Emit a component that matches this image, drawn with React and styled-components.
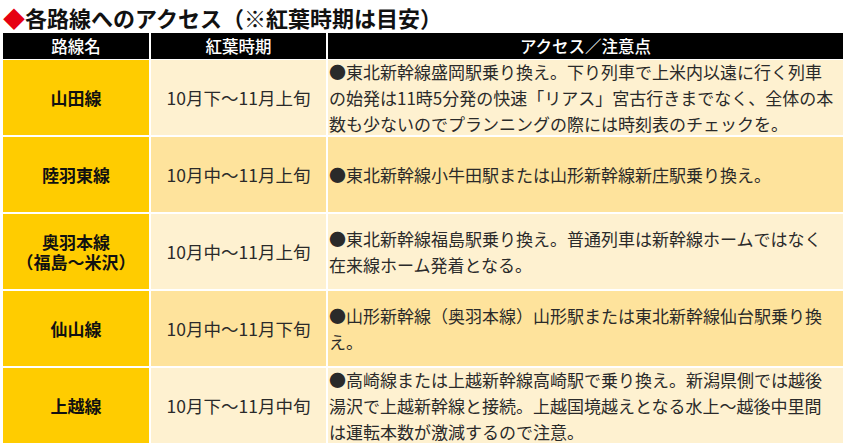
import React from "react";
import styled, { createGlobalStyle } from "styled-components";

const Global = createGlobalStyle`
  html, body { margin: 0; padding: 0; background: #ffffff; }
  body { font-family: "Noto Sans CJK JP", "Noto Sans", sans-serif; }
`;

const Page = styled.div`
  width: 846px;
  height: 445px;
  padding: 0 3px;
  box-sizing: border-box;
  overflow: hidden;
`;

const Title = styled.h1`
  margin: 0;
  height: 33px;
  display: flex;
  align-items: center;
  font-size: 22px;
  font-weight: 700;
  color: #111;
  letter-spacing: 0;
  white-space: nowrap;
`;

const Diamond = styled.span`
  color: #e60012;
`;

const Table = styled.div`
  display: grid;
  grid-template-columns: 146px 175px 1fr;
  grid-template-rows: 25px repeat(5, 75px);
  column-gap: 2px;
  row-gap: 2px;
`;

const Head = styled.div`
  background: #000;
  color: #fff;
  font-size: 16.5px;
  font-weight: 500;
  display: flex;
  align-items: center;
  justify-content: center;
  margin-bottom: -1px;
`;

const LineName = styled.div`
  background: #ffcc00;
  color: #111;
  font-size: 17px;
  font-weight: 700;
  display: flex;
  flex-direction: column;
  align-items: center;
  justify-content: center;
  text-align: center;
`;

const NameLine = styled.span`
  display: block;
  line-height: 20px;
`;

const Period = styled.div`
  background: ${(p) => (p.$alt ? "#fee39c" : "#fef1d0")};
  color: #2a2a2a;
  font-size: 17.5px;
  display: flex;
  align-items: center;
  justify-content: center;
  white-space: nowrap;
`;

const Note = styled.div`
  background: ${(p) => (p.$alt ? "#fee39c" : "#fef1d0")};
  color: #2a2a2a;
  font-size: 17px;
  line-height: 26px;
  display: flex;
  align-items: center;
  padding-left: 1px;
  white-space: nowrap;
  overflow: hidden;
`;

const rows = [
  {
    name: ["山田線"],
    period: "10月下〜11月上旬",
    note: [
      "●東北新幹線盛岡駅乗り換え。下り列車で上米内以遠に行く列車",
      "の始発は11時5分発の快速「リアス」宮古行きまでなく、全体の本",
      "数も少ないのでプランニングの際には時刻表のチェックを。",
    ],
  },
  {
    name: ["陸羽東線"],
    period: "10月中〜11月上旬",
    note: ["●東北新幹線小牛田駅または山形新幹線新庄駅乗り換え。"],
  },
  {
    name: ["奥羽本線", "（福島〜米沢）"],
    period: "10月中〜11月上旬",
    note: [
      "●東北新幹線福島駅乗り換え。普通列車は新幹線ホームではなく",
      "在来線ホーム発着となる。",
    ],
  },
  {
    name: ["仙山線"],
    period: "10月中〜11月下旬",
    note: [
      "●山形新幹線（奥羽本線）山形駅または東北新幹線仙台駅乗り換",
      "え。",
    ],
  },
  {
    name: ["上越線"],
    period: "10月下〜11月中旬",
    note: [
      "●高崎線または上越新幹線高崎駅で乗り換え。新潟県側では越後",
      "湯沢で上越新幹線と接続。上越国境越えとなる水上〜越後中里間",
      "は運転本数が激減するので注意。",
    ],
  },
];

const Lines = ({ lines }) => (
  <div>
    {lines.map((l, i) => (
      <React.Fragment key={i}>
        {i > 0 && <br />}
        {l}
      </React.Fragment>
    ))}
  </div>
);

export default function App() {
  return (
    <>
      <Global />
      <Page>
        <Title>
          <Diamond>◆</Diamond>各路線へのアクセス（※紅葉時期は目安）
        </Title>
        <Table>
          <Head>路線名</Head>
          <Head>紅葉時期</Head>
          <Head>アクセス／注意点</Head>
          {rows.map((r, i) => (
            <React.Fragment key={i}>
              <LineName>
                {r.name.map((n, j) => (
                  <NameLine key={j}>{n}</NameLine>
                ))}
              </LineName>
              <Period $alt={i % 2 === 1}>{r.period}</Period>
              <Note $alt={i % 2 === 1}>
                <Lines lines={r.note} />
              </Note>
            </React.Fragment>
          ))}
        </Table>
      </Page>
    </>
  );
}
